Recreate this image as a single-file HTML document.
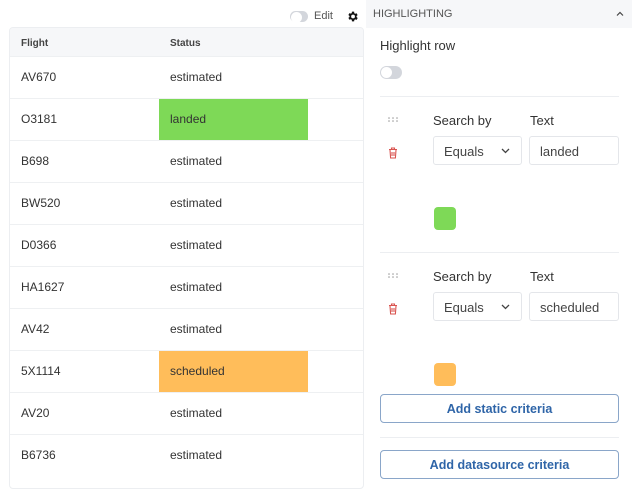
<!DOCTYPE html>
<html><head><style>
*{box-sizing:border-box;margin:0;padding:0}
body{width:635px;height:496px;background:#fff;font-family:"Liberation Sans",sans-serif;color:#333;position:relative;overflow:hidden}
.a{position:absolute}
.card{left:9px;top:27px;width:355px;height:462px;border:1px solid #eceef1;border-radius:4px;overflow:hidden}
.hdr{left:0;top:0;width:355px;height:28px;background:#f6f7f9;font-size:10px;font-weight:bold;color:#444}
.row{left:0;width:355px;height:42px;border-top:1px solid #eef0f2;font-size:12px;color:#333}
.row span{position:absolute;top:13px}
.hl{position:absolute;left:149px;top:0;width:149px;height:41px}
.lbl{font-size:13px;color:#333}
.box{border:1px solid #e4e6ea;border-radius:3px;height:29px;font-size:13px;color:#444;padding:7px 0 0 10px;background:#fff}
.btn{left:380px;width:239px;height:29px;border:1px solid #8aa6c9;border-radius:4px;color:#2f65a8;font-weight:bold;font-size:12.5px;text-align:center;padding-top:7px}
.tog{width:22px;height:13px;border-radius:7px;background:#d3d6dc}
.tog:after{content:"";position:absolute;left:1px;top:1px;width:11px;height:11px;border-radius:50%;background:#fff}
</style></head><body>
<div class="a tog" style="left:290px;top:11px;width:18px;height:11px"></div>
<div class="a" style="left:314px;top:10px;font-size:11px;color:#555">Edit</div>
<svg class="a" style="left:346px;top:10px" width="13" height="13" viewBox="0 0 24 24"><path fill="#111" d="M19.4 13a7.5 7.5 0 0 0 0-2l2.1-1.6-2-3.5-2.5 1a7 7 0 0 0-1.7-1L15 3h-4l-.4 2.7a7 7 0 0 0-1.7 1l-2.5-1-2 3.5L6.5 11a7.5 7.5 0 0 0 0 2l-2.1 1.6 2 3.5 2.5-1a7 7 0 0 0 1.7 1L11 21h4l.4-2.7a7 7 0 0 0 1.7-1l2.5 1 2-3.5zM13 15.5a3.5 3.5 0 1 1 0-7 3.5 3.5 0 0 1 0 7z"/></svg>
<div class="a card">
<div class="a hdr"><span class="a" style="left:11px;top:10px">Flight</span><span class="a" style="left:160px;top:10px">Status</span></div>
<div class="a row" style="top:28px"><span style="left:11px">AV670</span><span style="left:160px">estimated</span></div>
<div class="a row" style="top:70px"><div class="hl" style="background:#7ed957"></div><span style="left:11px">O3181</span><span style="left:160px">landed</span></div>
<div class="a row" style="top:112px"><span style="left:11px">B698</span><span style="left:160px">estimated</span></div>
<div class="a row" style="top:154px"><span style="left:11px">BW520</span><span style="left:160px">estimated</span></div>
<div class="a row" style="top:196px"><span style="left:11px">D0366</span><span style="left:160px">estimated</span></div>
<div class="a row" style="top:238px"><span style="left:11px">HA1627</span><span style="left:160px">estimated</span></div>
<div class="a row" style="top:280px"><span style="left:11px">AV42</span><span style="left:160px">estimated</span></div>
<div class="a row" style="top:322px"><div class="hl" style="background:#ffbd5a"></div><span style="left:11px">5X1114</span><span style="left:160px">scheduled</span></div>
<div class="a row" style="top:364px"><span style="left:11px">AV20</span><span style="left:160px">estimated</span></div>
<div class="a row" style="top:406px"><span style="left:11px">B6736</span><span style="left:160px">estimated</span></div>
</div>
<div class="a" style="left:366px;top:0;width:266px;height:28px;background:#f6f7f9"></div>
<div class="a" style="left:373px;top:8px;font-size:11px;color:#555">HIGHLIGHTING</div>
<svg class="a" style="left:616px;top:11px" width="8" height="6" viewBox="0 0 8 6"><path d="M1 4.5L4 1.5 7 4.5" stroke="#444" stroke-width="1.2" fill="none"/></svg>
<div class="a lbl" style="left:380px;top:38px">Highlight row</div>
<div class="a tog" style="left:380px;top:66px"></div>
<div class="a" style="left:380px;top:96px;width:239px;height:1px;background:#eceef1"></div>
<svg class="a" style="left:388px;top:117px" width="10" height="5" viewBox="0 0 10 5"><g fill="#999"><circle cx="1" cy="1" r=".8"/><circle cx="5" cy="1" r=".8"/><circle cx="9" cy="1" r=".8"/><circle cx="1" cy="4" r=".8"/><circle cx="5" cy="4" r=".8"/><circle cx="9" cy="4" r=".8"/></g></svg>
<div class="a lbl" style="left:433px;top:113px">Search by</div>
<div class="a lbl" style="left:530px;top:113px">Text</div>
<div class="a box" style="left:433px;top:136px;width:89px">Equals<svg class="a" style="left:67px;top:11px" width="9" height="6" viewBox="0 0 9 6"><path d="M1 1l3.5 3.5L8 1" stroke="#444" stroke-width="1.3" fill="none"/></svg></div>
<div class="a box" style="left:529px;top:136px;width:90px">landed</div>
<svg class="a" style="left:388px;top:147px" width="10" height="12" viewBox="0 0 10 12"><path d="M1 2.5h8M3.5 2.5V1h3v1.5M2 3l.6 8h4.8L8 3M4 5v4M6 5v4" stroke="#d9534f" stroke-width="1.1" fill="none"/></svg>
<div class="a" style="left:434px;top:207px;width:22px;height:23px;border-radius:4px;background:#7ed957"></div>
<div class="a" style="left:380px;top:252px;width:239px;height:1px;background:#eceef1"></div>
<svg class="a" style="left:388px;top:273px" width="10" height="5" viewBox="0 0 10 5"><g fill="#999"><circle cx="1" cy="1" r=".8"/><circle cx="5" cy="1" r=".8"/><circle cx="9" cy="1" r=".8"/><circle cx="1" cy="4" r=".8"/><circle cx="5" cy="4" r=".8"/><circle cx="9" cy="4" r=".8"/></g></svg>
<div class="a lbl" style="left:433px;top:269px">Search by</div>
<div class="a lbl" style="left:530px;top:269px">Text</div>
<div class="a box" style="left:433px;top:292px;width:89px">Equals<svg class="a" style="left:67px;top:11px" width="9" height="6" viewBox="0 0 9 6"><path d="M1 1l3.5 3.5L8 1" stroke="#444" stroke-width="1.3" fill="none"/></svg></div>
<div class="a box" style="left:529px;top:292px;width:90px">scheduled</div>
<svg class="a" style="left:388px;top:303px" width="10" height="12" viewBox="0 0 10 12"><path d="M1 2.5h8M3.5 2.5V1h3v1.5M2 3l.6 8h4.8L8 3M4 5v4M6 5v4" stroke="#d9534f" stroke-width="1.1" fill="none"/></svg>
<div class="a" style="left:434px;top:363px;width:22px;height:23px;border-radius:4px;background:#ffbd5a"></div>
<div class="a btn" style="top:394px">Add static criteria</div>
<div class="a" style="left:380px;top:437px;width:239px;height:1px;background:#eceef1"></div>
<div class="a btn" style="top:450px">Add datasource criteria</div>
</body></html>
